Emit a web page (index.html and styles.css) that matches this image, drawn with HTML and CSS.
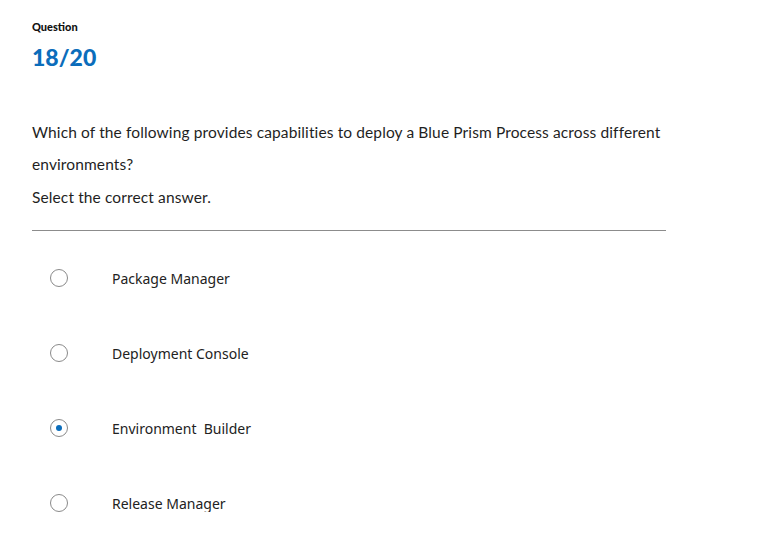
FILE: index.html
```html
<!DOCTYPE html>
<html lang="en">

<head>
    <meta charset="UTF-8">
    <meta name="viewport" content="width=device-width, initial-scale=1.0">
    <title>Quiz - Question 18</title>
    <link rel="stylesheet" href="styles.css">
</head>

<body>
    <div class="quiz">
        <!-- Question header -->
        <div class="quiz-header">
            <p class="label">Question</p>
            <p class="counter">18/20</p>
        </div>

        <!-- Question text -->
        <div class="question">
            <p class="question-text">Which of the following provides capabilities to deploy a Blue Prism Process across different environments?</p>
            <p class="instruction">Select the correct answer.</p>
        </div>

        <hr class="divider">

        <!-- Answer options -->
        <ul class="options">
            <li class="option"><span class="radio"></span><span class="option-text">Package Manager</span></li>
            <li class="option"><span class="radio"></span><span class="option-text">Deployment Console</span></li>
            <li class="option selected"><span class="radio"></span><span class="option-text">Environment&nbsp; Builder</span></li>
            <li class="option"><span class="radio"></span><span class="option-text">Release Manager</span></li>
        </ul>
    </div>
</body>

</html>
```

FILE: styles.css
```css
:root {
    --color-blue: #0b6dbb;
    --color-text: #1f1f1f;
    --color-border: #8c8c8c;
}

* {
    margin: 0;
    padding: 0;
    box-sizing: border-box;
}

body {
    background-color: white;
    font-family: 'Lato', 'Noto Sans', sans-serif;
    color: var(--color-text);
}

.quiz {
    width: 666px;
    padding: 20px 0 0 32px;
}

/* Header */
.label {
    font-size: 11px;
    font-weight: 900;
    line-height: 14px;
    color: #111;
}

.counter {
    margin-top: 10px;
    font-size: 23px;
    font-weight: 900;
    line-height: 26px;
    color: var(--color-blue);
}

/* Question */
.question {
    margin-top: 46px;
    font-size: 15.5px;
    letter-spacing: 0.12px;
    line-height: 32px;
}

.instruction {
    margin-top: 1px;
}

.divider {
    margin-top: 17px;
    border: none;
    border-top: 1px solid var(--color-border);
}

/* Options */
.options {
    list-style: none;
    margin-top: 38px;
    display: flex;
    flex-direction: column;
    gap: 57px;
}

.option {
    display: flex;
    align-items: center;
    height: 18px;
}

.radio {
    width: 18px;
    height: 18px;
    margin-left: 18px;
    border: 1px solid #8a8a8a;
    border-radius: 50%;
    display: flex;
    align-items: center;
    justify-content: center;
}

.option.selected .radio::after {
    content: '';
    width: 6px;
    height: 6px;
    border-radius: 50%;
    background-color: var(--color-blue);
}

.option-text {
    margin-left: 44px;
    font-family: 'Noto Sans', sans-serif;
    font-size: 14px;
    color: #222;
}
```
